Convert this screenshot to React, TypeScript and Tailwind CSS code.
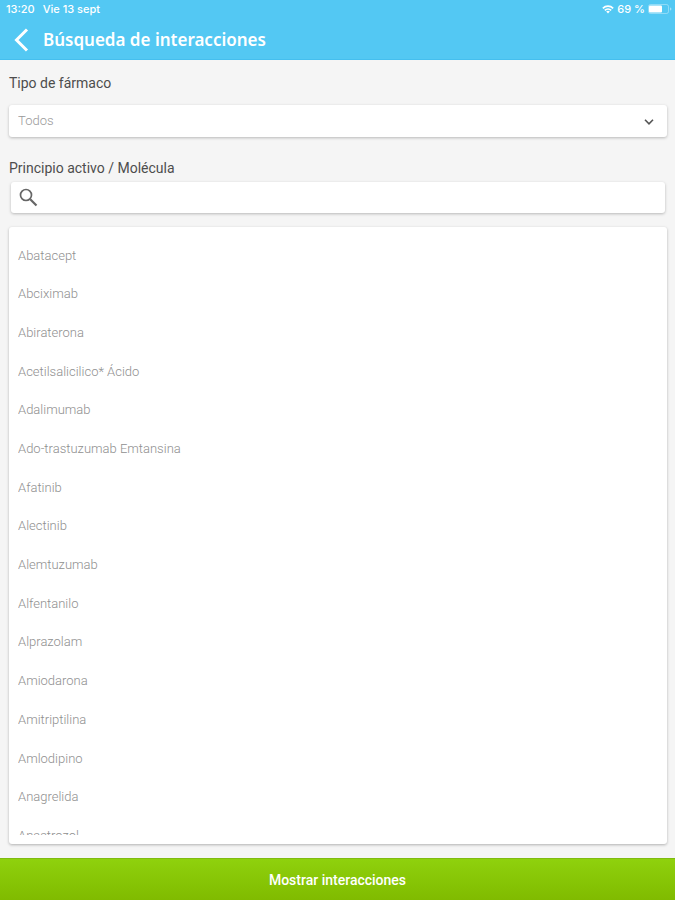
import { useState } from 'react';

const drugs = [
  'Abatacept',
  'Abciximab',
  'Abiraterona',
  'Acetilsalicilico* Ácido',
  'Adalimumab',
  'Ado-trastuzumab Emtansina',
  'Afatinib',
  'Alectinib',
  'Alemtuzumab',
  'Alfentanilo',
  'Alprazolam',
  'Amiodarona',
  'Amitriptilina',
  'Amlodipino',
  'Anagrelida',
  'Anastrozol',
];

function WifiIcon() {
  return (
    <svg viewBox="0 0 14 10" className="w-3 h-[9px]" fill="none" stroke="currentColor" strokeWidth="2" aria-hidden="true">
      <path d="M1 3.6a8.5 8.5 0 0 1 12 0" />
      <path d="M3.3 6a5.3 5.3 0 0 1 7.4 0" />
      <path d="M4.9 7.4a3 3 0 0 1 4.2 0L7 9.6z" fill="currentColor" stroke="none" />
    </svg>
  );
}

function BatteryIcon() {
  return (
    <svg viewBox="0 0 24 10" className="w-6 h-[10px]" aria-hidden="true">
      <rect x="0.5" y="0.5" width="20" height="9" rx="2" fill="none" stroke="white" strokeOpacity="0.35" />
      <rect x="1" y="1.5" width="13" height="7" rx="1" fill="white" />
      <path d="M22 3.5v3c1-.3 1.4-.8 1.4-1.5S23 3.8 22 3.5z" fill="white" fillOpacity="0.45" />
    </svg>
  );
}

function Header() {
  return (
    <header className="bg-[#53c8f3] text-white border-b border-[#45bfef]">
      <div className="flex items-center justify-between h-[18px] pl-[6px] pr-[3px] font-['Inter',sans-serif] text-[11px] font-medium">
        <div className="flex gap-2">
          <span>13:20</span>
          <span>Vie 13 sept</span>
        </div>
        <div className="flex items-center gap-[3px]">
          <WifiIcon />
          <span>69 %</span>
          <BatteryIcon />
        </div>
      </div>
      <div className="flex items-center h-[41px] pt-[3px] pl-[14px] gap-[14px]">
        <button type="button" aria-label="Volver">
          <svg viewBox="0 0 15 24" className="w-[15px] h-6" fill="none" stroke="currentColor" strokeWidth="3" aria-hidden="true">
            <path d="M13 1.5 2.5 12 13 22.5" />
          </svg>
        </button>
        <h1 className="font-['Noto_Sans',sans-serif] text-[17px] font-semibold">Búsqueda de interacciones</h1>
      </div>
    </header>
  );
}

export default function App() {
  const [type, setType] = useState('todos');
  const [query, setQuery] = useState('');

  const visible = drugs.filter((d) => d.toLowerCase().includes(query.toLowerCase()));

  return (
    <div className="flex flex-col h-screen bg-[#f5f5f5] font-['Roboto',sans-serif] text-[#4d4d4d]">
      <Header />

      <main className="flex flex-col flex-1 min-h-0 pl-[9px] pr-2 pt-[13px] pb-[14px]">
        <label htmlFor="type" className="text-sm">
          Tipo de fármaco
        </label>
        <div className="relative mt-3">
          <select
            id="type"
            value={type}
            onChange={(e) => setType(e.target.value)}
            className="block w-full h-8 pl-[9px] pr-8 appearance-none rounded-[3px] bg-white text-[13px] font-light text-[#999] shadow-[0_1px_3px_rgba(0,0,0,0.25)]"
          >
            <option value="todos">Todos</option>
          </select>
          <svg
            viewBox="0 0 10 6"
            className="absolute right-[13px] top-[14px] w-[10px] h-[6px] pointer-events-none"
            fill="none"
            stroke="#555"
            strokeWidth="1.6"
            aria-hidden="true"
          >
            <path d="M1 .8 5 4.8 9 .8" />
          </svg>
        </div>

        <label htmlFor="query" className="mt-[21px] text-sm">
          Principio activo / Molécula
        </label>
        <div className="flex items-center shrink-0 h-[31px] mt-1 mx-[2px] pl-2 gap-2 rounded-[3px] bg-white shadow-[0_1px_3px_rgba(0,0,0,0.25)]">
          <svg viewBox="0 0 19 19" className="w-[19px] h-[19px]" fill="none" stroke="#666" aria-hidden="true">
            <circle cx="7" cy="7" r="5.5" strokeWidth="1.7" />
            <path d="M11.2 11.2 17.5 17.5" strokeWidth="2.2" />
          </svg>
          <input
            id="query"
            type="text"
            value={query}
            onChange={(e) => setQuery(e.target.value)}
            className="flex-1 text-sm outline-none"
          />
        </div>

        <div className="flex-1 min-h-0 mt-[14px] p-[9px] rounded-[3px] bg-white shadow-[0_1px_3px_rgba(0,0,0,0.28)]">
          <div className="h-full overflow-hidden">
            <ul className="grid auto-rows-fr h-[619px] text-[13px] font-light text-[#8f8f8f]">
              {visible.map((drug) => (
                <li key={drug} className="flex items-center">
                  {drug}
                </li>
              ))}
            </ul>
          </div>
        </div>
      </main>

      <button
        type="button"
        className="h-[42px] shrink-0 border-t border-[#7fbb10] bg-linear-to-b from-[#8fd10d] to-[#80bb00] text-sm font-medium text-white"
      >
        Mostrar interacciones
      </button>
    </div>
  );
}
